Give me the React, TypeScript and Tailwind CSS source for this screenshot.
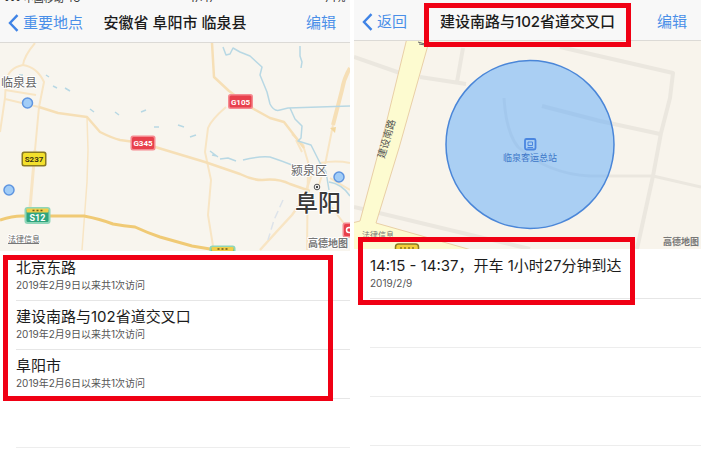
import type { ReactNode } from "react";

const visits = [
  { title: "北京东路", detail: "2019年2月9日以来共1次访问" },
  { title: "建设南路与102省道交叉口", detail: "2019年2月9日以来共1次访问" },
  { title: "阜阳市", detail: "2019年2月6日以来共1次访问" },
];

const trips = [{ title: "14:15 - 14:37，开车 1小时27分钟到达", detail: "2019/2/9" }];

function NavBar({
  back,
  title,
  marked,
  className,
}: {
  back: string;
  title: string;
  marked?: boolean;
  className: string;
}) {
  return (
    <header
      className={`grid grid-cols-[1fr_auto_1fr] items-center border-b border-[#dcdad6] bg-[#f8f8f8] ${className}`}
    >
      <button type="button" className="flex items-center gap-1 pl-2 text-[15px] text-[#4a8fe8]">
        <svg viewBox="0 0 11 18" className="h-[18px] w-[11px]" aria-hidden="true">
          <path d="M9.5 1.2 2 9l7.500 7.800" fill="none" stroke="#3f83e6" strokeWidth="2.400" />
        </svg>
        {back}
      </button>
      <div className="relative">
        <h1 className="text-[15px] font-medium text-[#1c1c1c]">{title}</h1>
        {marked && (
          <span className="absolute -inset-x-4 -top-2 -bottom-3.5 z-10 border-5 border-[#f00014]" />
        )}
      </div>
      <button type="button" className="justify-self-end pr-3.5 text-[15px] text-[#4a8fe8]">
        编辑
      </button>
    </header>
  );
}

function Rows({
  items,
  blanks,
  children,
}: {
  items: { title: string; detail: string }[];
  blanks: number;
  children: ReactNode;
}) {
  return (
    <div className="relative pt-px">
      <ul className="pl-4">
        {items.map((item) => (
          <li key={item.title} className="h-[49px] border-b border-[#e6e6e6] pt-[7px]">
            <p className="text-[15px] leading-[18px] whitespace-nowrap text-[#1c1c1c]">{item.title}</p>
            <p className="text-[10px] leading-4 whitespace-nowrap text-[#555]">{item.detail}</p>
          </li>
        ))}
        {Array.from({ length: blanks }, (_, i) => (
          <li key={i} className="h-[49px] border-b border-[#ededed]" />
        ))}
      </ul>
      {children}
    </div>
  );
}

function Shield({
  x,
  y,
  label,
  fill,
  edge,
  ink,
}: {
  x: number;
  y: number;
  label: string;
  fill: string;
  edge: string;
  ink: string;
}) {
  return (
    <g>
      <rect x={x - 12.5} y={y - 7.5} width="25" height="15" rx="2.500" fill={edge} />
      <rect x={x - 11} y={y - 6} width="22" height="12" rx="1.500" fill={fill} />
      <text x={x} y={y + 3} textAnchor="middle" fontSize="8" fontWeight="700" fill={ink} fontFamily="Roboto, sans-serif">
        {label}
      </text>
    </g>
  );
}

function GreenShield({ x, y, label }: { x: number; y: number; label?: string }) {
  return (
    <g>
      <rect x={x - 13} y={y - 8.5} width="26" height="17" rx="3" fill="#8fd6b8" />
      <rect x={x - 11} y={y - 6.5} width="22" height="13" rx="1.500" fill="#2fa47d" />
      <rect x={x - 11} y={y - 7} width="22" height="4" rx="1" fill="#f2cf4a" />
      <path d={`M${x - 5} ${y - 5}h10`} stroke="#6b5a1a" strokeWidth="1.500" strokeDasharray="2 2" />
      <text x={x} y={y + 5} textAnchor="middle" fontSize="9" fontWeight="700" fill="#fff" fontFamily="Roboto, sans-serif">
        {label}
      </text>
    </g>
  );
}

function RegionMap() {
  return (
    <svg
      viewBox="0 43 350 208"
      preserveAspectRatio="xMidYMid slice"
      className="h-52 w-full bg-[#f8f5ee]"
      role="img"
      aria-label="阜阳市地图"
    >
      <g fill="none" stroke="#f8e5c4" strokeWidth="2" strokeLinejoin="round">
        <path d="M35 43Q24 56 23 65Q8 68 6 82L5 98L0 132" />
        <path d="M23 65Q37 67 44 82L39 107L35 150" />
        <path d="M5 90L36 95M5 99L39 107" />
        <path d="M87 117L88 150L87 182L82 250" strokeWidth="1.500" />
        <path d="M35 150L30 208" strokeWidth="3" />
        <path d="M226 107Q211 120 208 128L205 152L211 180L208 215L213 246" />
        <path d="M303 145L308 162L307 250" />
        <path d="M292 134L304 146M296 140L302 152" />
        <path d="M333 125L325 165L318 188M320 163Q336 160 350 163" />
        <path d="M311 176Q304 200 292 215Q278 230 260 250" strokeWidth="2.500" />
        <path d="M322 195L346 226M330 178L350 190" />
      </g>
      <g fill="none" stroke="#f6dfb6" strokeWidth="2.500" strokeLinejoin="round">
        <path d="M39 107L58 113L87 117L100 132Q112 138 120 140L142 143L175 153L205 162L240 174Q252 180 262 180Q278 178 290 184L310 191" />
        <path d="M212 43L214 77L229 91L252 108L270 118L284 122L304 148" />
        <path d="M350 68Q344 78 342 90L333 125" strokeWidth="4" />
      </g>
      <path d="M330 128l6-1-1 6z" fill="#f3d79e" />
      <path
        d="M0 220Q12 216 22 216L84 216Q100 219 113 224Q124 226 135 227Q148 233 160 237L192 246L222 251"
        fill="none"
        stroke="#f0ca75"
        strokeWidth="3"
      />
      <g fill="none" stroke="#b8d8e4" strokeWidth="1.500" strokeLinejoin="round">
        <path d="M223 47L226 55L230 54L233 48L240 52L250 56L262 67L260 75L267 92L270 104Q274 112 280 110L288 108L350 106" />
        <path d="M290 108L295 119L302 126L301 138L298 141L311 145L316 155L320 163L326 172L329 190" />
        <path d="M300 46L300 56L302 62L301 68" />
        <path d="M243 160Q258 156 270 157Q282 161 292 165" />
        <path d="M329 182Q342 184 350 196" />
        <path d="M210 151l8 6M220 159l8-1 8 3M212 155l5 1M190 137l6-2M178 125l6 2" />
        <path d="M90 109l4 3M115 112l4 3M141 112l5-2M154 127h5M65 88l5 3M53 86l4 2M46 75l3 2M19 75h4" />
        <path d="M283 200l-9 20-6 20" stroke="#dde3ea" strokeDasharray="8 4" />
      </g>

      <Shield x={143} y={143} label="G345" fill="#e8404c" edge="#f58a90" ink="#fff" />
      <Shield x={240.5} y={101.500} label="G105" fill="#e8404c" edge="#f58a90" ink="#fff" />
      <Shield x={355} y={230} label="" fill="#e8404c" edge="#f58a90" ink="#fff" />
      <circle cx="349" cy="230" r="2.500" fill="none" stroke="#fff" strokeWidth="1.500" />
      <Shield x={34} y={159} label="S237" fill="#f3e02c" edge="#8a7a22" ink="#3a3410" />
      <GreenShield x={37.500} y={215.500} label="S12" />
      <GreenShield x={222.500} y={254} />

      <g fill="#a2cdf7" stroke="#5f95e0" strokeWidth="1.500">
        <circle cx="27.500" cy="103" r="5" />
        <circle cx="9" cy="190" r="5" />
        <circle cx="339" cy="177" r="5" />
      </g>
      <circle cx="317" cy="187" r="2.800" fill="#fff" stroke="#555" />
      <circle cx="317" cy="187" r="1.200" fill="#444" />

      <g stroke="#fff" strokeWidth="2" paintOrder="stroke" strokeLinejoin="round">
        <text x="1" y="87" fontSize="12" fill="#666">临泉县</text>
        <text x="291" y="175" fontSize="12" fill="#666">颍泉区</text>
        <text x="295" y="211" fontSize="23" fontWeight="500" fill="#3a3a3a">阜阳</text>
        <text x="8" y="242" fontSize="8" fill="#666">法律信息</text>
        <text x="308" y="247" fontSize="10" fontWeight="700" fill="#777">高德地图</text>
      </g>
      <path d="M8 243.500h31" stroke="#777" />
    </svg>
  );
}

function StreetMap() {
  return (
    <svg
      viewBox="354 41 347 208"
      preserveAspectRatio="xMidYMid slice"
      className="h-52 w-full bg-[#f8f4ec]"
      role="img"
      aria-label="建设南路地图"
    >
      <g fill="none" stroke="#ebe7df" strokeWidth="4" strokeLinejoin="round">
        <path d="M354 57L400 73M420 77L466 84M463 48L457 82" />
        <path d="M354 207L450 230L530 249" />
        <path d="M560 47L673 73L670 98L661 133L653 176L637 249" />
        <path d="M542 106L600 121L660 134" />
        <path d="M504 98Q506 132 518 147Q548 174 590 176L653 176L701 187" strokeWidth="3" />
      </g>
      <path
        d="M407 38L430 38L399 148L376 223L475 251L352 251L352 223L360 221L386 124Z"
        fill="#fdfbd0"
        stroke="#e9cfa6"
      />
      <rect x="395.500" y="244" width="23" height="14" rx="3" fill="#f3cf3c" stroke="#8a7a22" strokeWidth="1.500" />
      <path d="M400 248h14" stroke="#8a7a22" strokeWidth="1.500" strokeDasharray="2 2" />
      <circle cx="530" cy="144.500" r="84" fill="#62acfa" fillOpacity="0.520" stroke="#4a86d8" strokeWidth="1.500" />
      <rect x="525" y="139" width="10.500" height="10.500" rx="1.500" fill="none" stroke="#4a86e0" strokeWidth="1.800" />
      <path d="M528 142h4.500v3.500H528zM527.500 147.500h5.500" fill="none" stroke="#4a86e0" />
      <text x="530" y="161" fontSize="9" textAnchor="middle" fill="#3d77c8">临泉客运总站</text>
      <text x="387" y="142" fontSize="10" textAnchor="middle" fill="#555" transform="rotate(-74 387 139)">
        建设南路
      </text>
      <path d="M418 42l7 2M419 44l6 1" stroke="#666" />
      <text x="362" y="238" fontSize="8" fill="#777">法律信息</text>
      <text x="663" y="245" fontSize="9" fontWeight="700" fill="#777">高德地图</text>
    </svg>
  );
}

export default function App() {
  return (
    <main className="grid min-h-screen grid-cols-[350fr_347fr] items-start gap-1 overflow-hidden bg-white font-['Inter','Noto_Sans_CJK_SC',sans-serif]">
      <section className="min-w-0">
        <div className="flex h-1 items-end justify-between overflow-hidden bg-[#f8f8f8] px-1 text-[10px] leading-3 text-[#333]">
          <span>••• 中国移动 4G</span>
          <span>17:47</span>
          <span>74%</span>
        </div>
        <NavBar back="重要地点" title="安徽省 阜阳市 临泉县" className="h-[39px]" />
        <RegionMap />
        <Rows items={visits} blanks={1}>
          <span className="absolute top-1 right-[5%] left-[3px] h-[146px] border-5 border-[#f00014]" />
        </Rows>
      </section>
      <section className="min-w-0">
        <div className="h-1 bg-[#f8f8f8]" />
        <NavBar back="返回" title="建设南路与102省道交叉口" marked className="h-[37px]" />
        <StreetMap />
        <Rows items={trips} blanks={3}>
          <span className="absolute -top-3 right-[19%] left-1 h-[68px] border-5 border-[#f00014]" />
        </Rows>
      </section>
    </main>
  );
}
